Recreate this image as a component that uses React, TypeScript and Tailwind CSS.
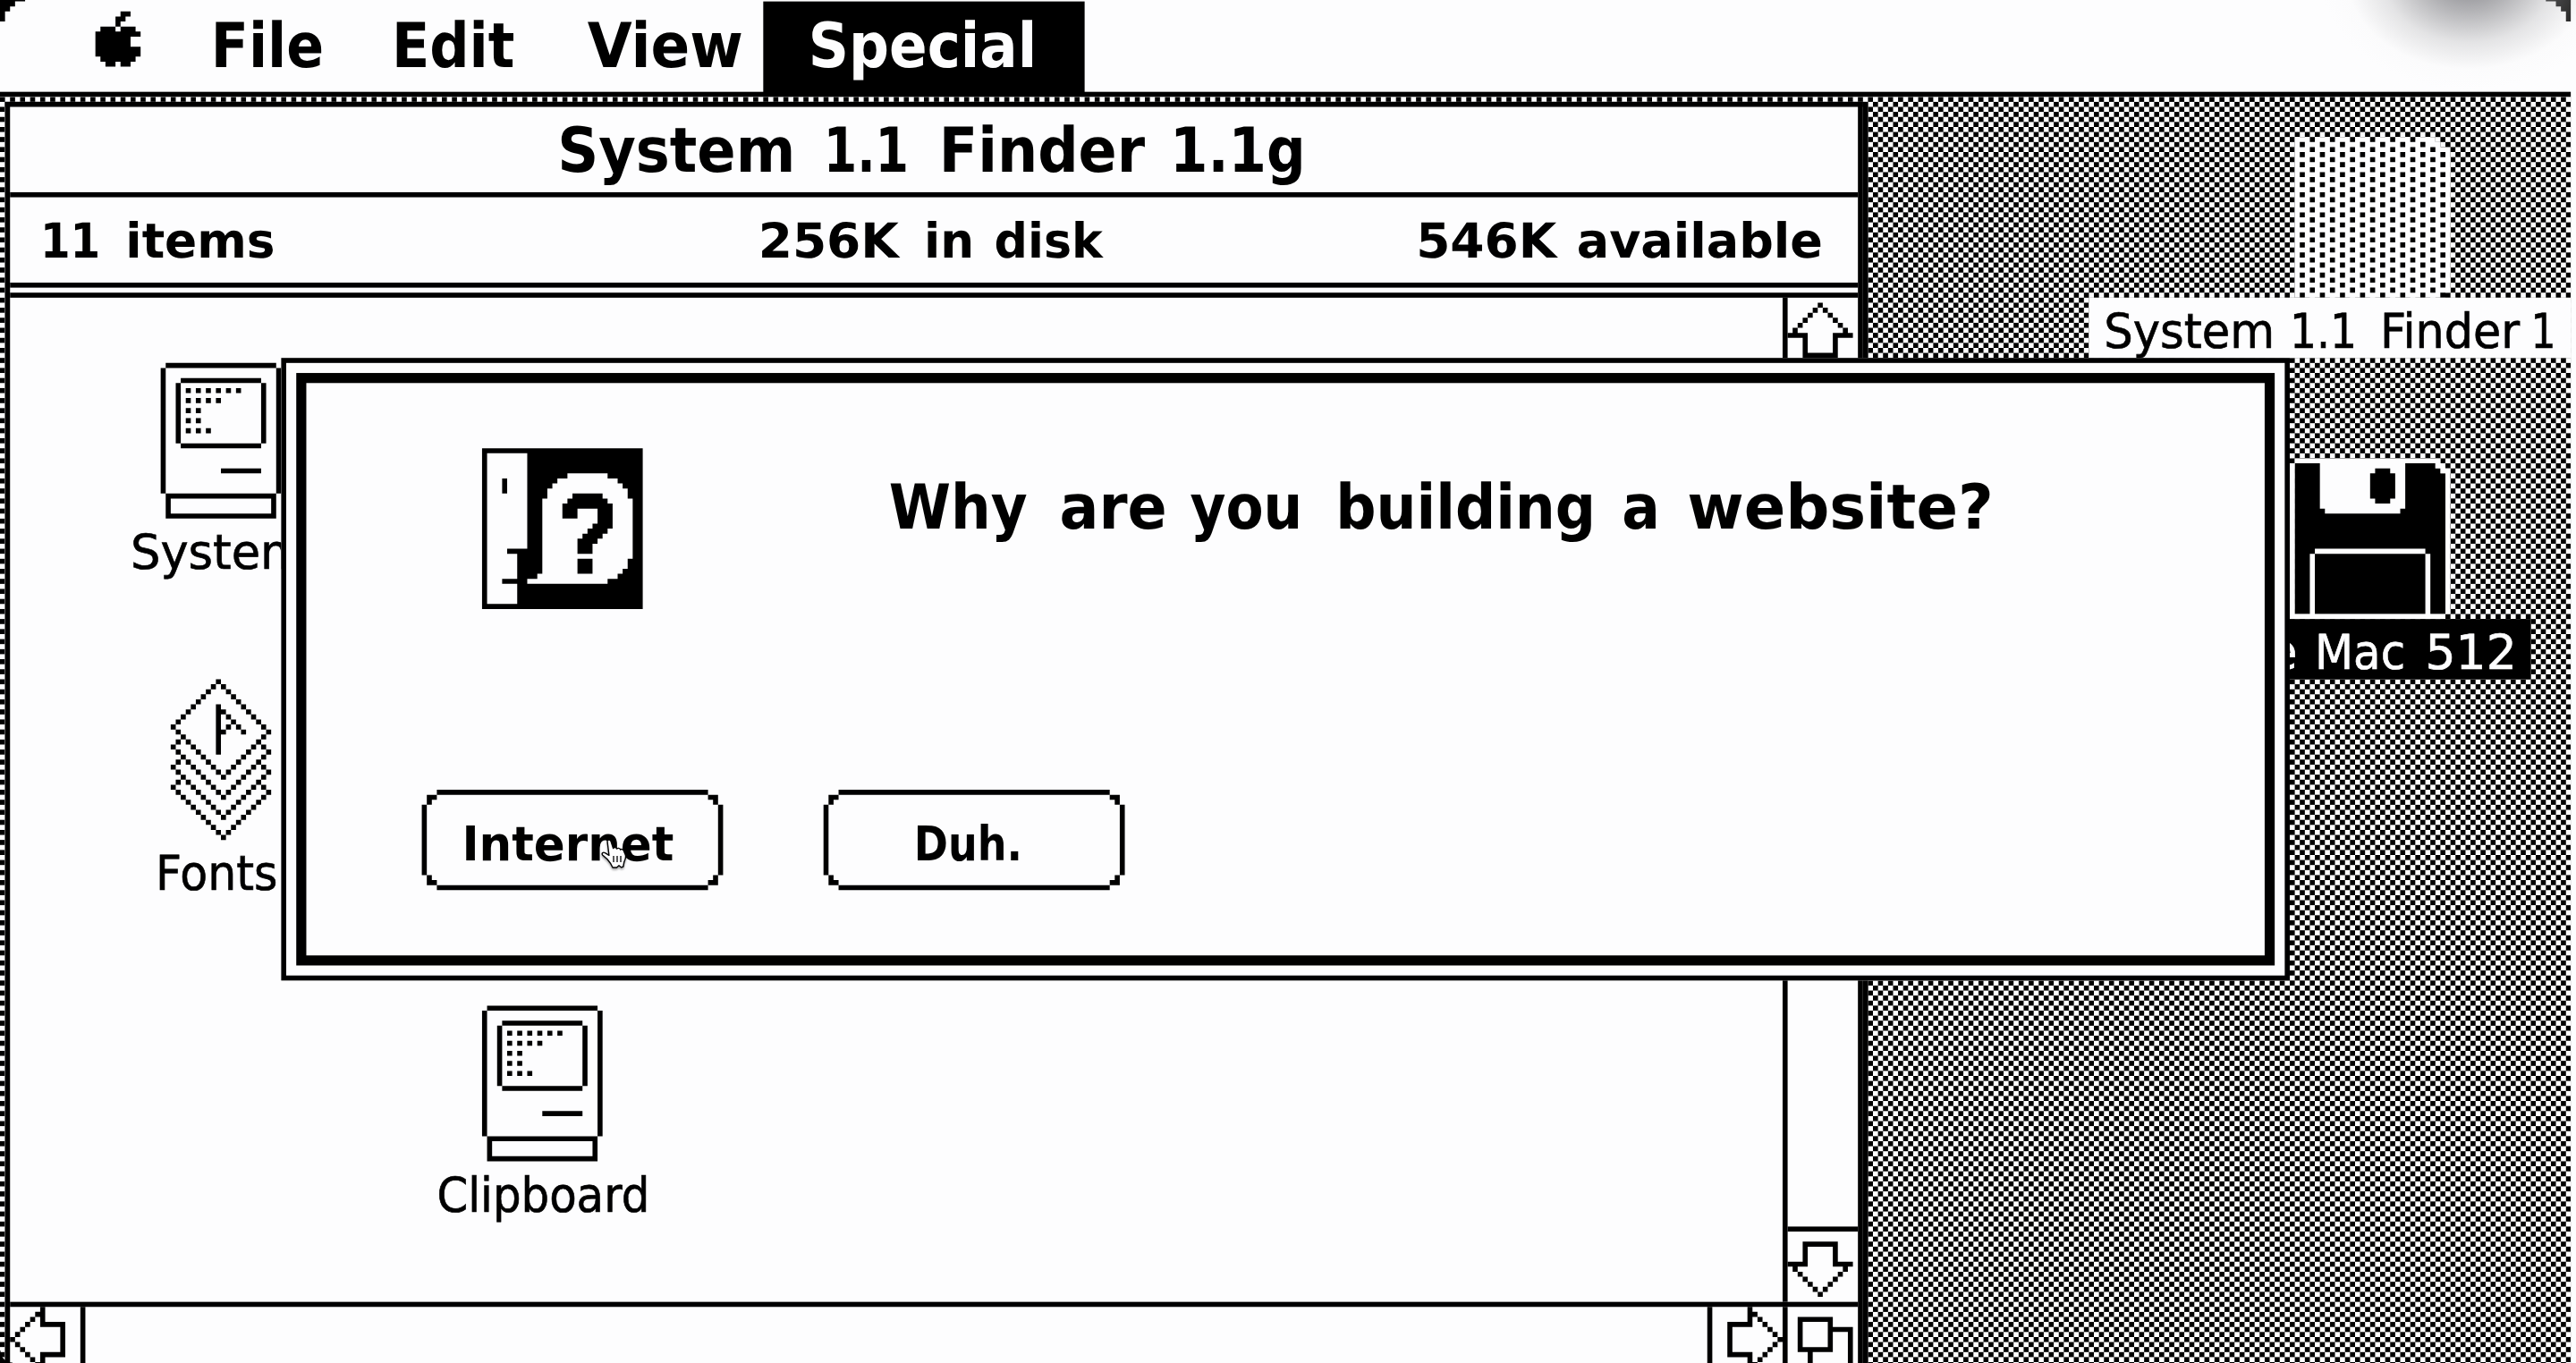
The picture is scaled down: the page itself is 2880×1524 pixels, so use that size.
import React, { useLayoutEffect, useRef } from "react";

type Rect = [number, number, number, number];

const box = (x: number, y: number, w: number, h: number): Rect[] => [
  [x, y, w, 1],
  [x, y + h - 1, w, 1],
  [x, y, 1, h],
  [x + w - 1, y, 1, h],
];

const diag = (x: number, y: number, n: number, dx: number, dy: number): Rect[] =>
  Array.from({ length: n }, (_, i): Rect => [x + i * dx, y + i * dy, 1, 1]);

const toPath = (rects: Rect[]) =>
  rects.map(([x, y, w, h]) => `M${x} ${y}h${w}v${h}h${-w}z`).join("");

/** A one-bit bitmap built from whole-pixel rectangles. */
function Bitmap({
  w,
  h,
  ink,
  paper = [],
  className = "",
}: {
  w: number;
  h: number;
  ink: Rect[];
  paper?: Rect[];
  className?: string;
}) {
  return (
    <svg width={w} height={h} viewBox={`0 0 ${w} ${h}`} className={`block shrink-0 overflow-visible ${className}`}>
      {paper.length > 0 && <path d={toPath(paper)} fill="#fdfdfe" />}
      <path d={toPath(ink)} fill="#000" />
    </svg>
  );
}

/** Text squeezed horizontally so that it fills the width given by its class. */
function Word({ children, className }: { children: string; className: string }) {
  const outer = useRef<HTMLSpanElement>(null);
  const inner = useRef<HTMLSpanElement>(null);
  useLayoutEffect(() => {
    const fit = () => {
      if (!outer.current || !inner.current) return;
      inner.current.style.transform = "none";
      const a = outer.current.getBoundingClientRect().width;
      const b = inner.current.getBoundingClientRect().width;
      if (b > 0) inner.current.style.transform = `scaleX(${a / b})`;
    };
    fit();
    document.fonts?.ready.then(fit);
  }, []);
  return (
    <span ref={outer} className={`block shrink-0 whitespace-nowrap ${className}`}>
      <span ref={inner} className="inline-block origin-left">
        {children}
      </span>
    </span>
  );
}

const CHICAGO =
  "font-['DejaVu_Sans_Condensed','DejaVu_Sans',sans-serif] font-bold text-[12.35px] leading-[12px]";
const CHICAGO_SMALL =
  "font-['DejaVu_Sans_Condensed','DejaVu_Sans',sans-serif] font-bold text-[9.6px] leading-[12px]";
const GENEVA_BOLD = "font-['DejaVu_Sans',sans-serif] font-bold text-[9.6px] leading-[12px]";
const GENEVA = "font-['DejaVu_Sans',sans-serif] text-[9.6px] leading-[12px] [-webkit-text-stroke:0.12px_currentColor]";

const APPLE: Rect[] = [
  [5, 0, 2, 1], [4, 1, 2, 1], [4, 2, 1, 1], [1, 3, 3, 1], [5, 3, 3, 1], [0, 4, 9, 1],
  [0, 5, 7, 2], [0, 7, 9, 2], [1, 9, 7, 1], [2, 10, 2, 1], [5, 10, 2, 1],
];

const dots = (y: number, n: number): Rect[] =>
  Array.from({ length: n }, (_, i): Rect => [5 + i * 2, y, 1, 1]);

const COMPACT_MAC: Rect[] = [
  [1, 0, 22, 1], [0, 1, 1, 25], [23, 1, 1, 25],
  [4, 3, 16, 1], [3, 4, 1, 12], [20, 4, 1, 12], [4, 16, 16, 1],
  ...dots(5, 6), ...dots(7, 4), ...dots(9, 2), ...dots(11, 2), ...dots(13, 3),
  [12, 21, 8, 1],
  ...box(1, 26, 22, 5),
];

const SUITCASE: Rect[] = [
  ...diag(9, 0, 10, -1, 1),
  ...diag(10, 1, 10, 1, 1),
  ...[0, 4, 8, 12].flatMap((k) => [...diag(0, 9 + k, 11, 1, 1), ...diag(19, 10 + k, 10, -1, 1)]),
  ...[4, 8, 12].flatMap((k): Rect[] => [[1, 8 + k, 1, 1], [18, 9 + k, 1, 1], [17, 8 + k, 1, 1]]),
  [9, 5, 1, 10],
  ...diag(10, 6, 5, 1, 1),
  [11, 9, 1, 1], [10, 10, 1, 1],
];

const QUESTION_PAPER: Rect[] = [
  [1, 1, 8, 19], [1, 20, 4, 1], [1, 21, 6, 5], [1, 26, 3, 1], [1, 27, 6, 4],
  [17, 5, 8, 1], [15, 6, 12, 1], [14, 7, 14, 1], [13, 8, 16, 2], [12, 10, 18, 12],
  [12, 22, 17, 2], [12, 24, 16, 1], [11, 25, 16, 1], [9, 26, 16, 1],
];
const QUESTION_INK: Rect[] = [
  [4, 6, 1, 3],
  [18, 9, 6, 1], [17, 10, 8, 1], [16, 11, 10, 1], [16, 12, 3, 2], [23, 12, 3, 3], [22, 15, 4, 1],
  [21, 16, 4, 1], [20, 17, 4, 1], [19, 18, 4, 1], [19, 19, 3, 2], [19, 22, 3, 3],
];

const UP_ARROW: Rect[] = [
  ...diag(6, 0, 6, -1, 1), ...diag(7, 1, 5, 1, 1), [0, 6, 4, 1], [9, 6, 4, 1],
  [3, 6, 1, 5], [9, 6, 1, 5], [3, 10, 7, 1],
];
const DOWN_ARROW: Rect[] = [
  [3, 0, 7, 1], [3, 0, 1, 5], [9, 0, 1, 5], [0, 4, 4, 1], [9, 4, 4, 1],
  ...diag(1, 5, 6, 1, 1), ...diag(11, 5, 5, -1, 1),
];
const RIGHT_ARROW: Rect[] = [
  [4, 0, 1, 4], [0, 3, 5, 1], [0, 3, 1, 7], [0, 9, 5, 1], [4, 9, 1, 4],
  ...diag(5, 1, 6, 1, 1), ...diag(9, 7, 5, -1, 1),
];
const LEFT_ARROW: Rect[] = [
  [6, 0, 1, 4], [6, 3, 5, 1], [10, 3, 1, 7], [6, 9, 5, 1], [6, 9, 1, 4],
  ...diag(5, 1, 6, -1, 1), ...diag(1, 7, 5, 1, 1),
];
const GROW_BOX: Rect[] = [...box(0, 0, 7, 7), [7, 2, 4, 1], [10, 2, 1, 10], [2, 7, 1, 5]];

const BUTTON_FRAME: Rect[] = [
  [3, 0, 54, 1], [3, 19, 54, 1], [0, 3, 1, 14], [59, 3, 1, 14],
  [1, 1, 2, 1], [1, 2, 1, 1], [57, 1, 2, 1], [58, 2, 1, 1],
  [1, 18, 2, 1], [1, 17, 1, 1], [57, 18, 2, 1], [58, 17, 1, 1],
];

const FLOPPY_INK: Rect[] = [
  [1, 1, 28, 1], [1, 2, 29, 1], [1, 3, 30, 28],
];
const FLOPPY_LINES: Rect[] = [
  [1, 0, 29, 1], [0, 1, 1, 31], [29, 1, 2, 1], [30, 2, 2, 1], [31, 3, 1, 28], [0, 31, 31, 1],
  [6, 0, 17, 10], [7, 10, 15, 1],
  [5, 18, 22, 1], [4, 19, 1, 12], [27, 19, 1, 12],
];
const FLOPPY_HUB: Rect[] = [[17, 2, 3, 7], [16, 3, 5, 5]];

const GHOST_PAPER: Rect[] = [[0, 0, 28, 1], [0, 1, 29, 1], [0, 2, 30, 1], [0, 3, 31, 28], [0, 31, 29, 1]];
const GHOST_DOTS: Rect[] = Array.from({ length: 32 }, (_, r) => r).flatMap((r) =>
  Array.from({ length: 8 }, (_, i): Rect => [(r % 2 ? 1 : 3) + i * 4, r, 1, 1]).filter(
    ([x]) => x < (r === 0 ? 27 : r < 3 ? 26 + r : 30)
  )
);

function MenuBar() {
  return (
    <header className="relative flex h-[20px] shrink-0 border-b border-black bg-[#fdfdfe]">
      <Bitmap w={9} h={11} ink={APPLE} className="mt-[3px] ml-[19px]" />
      <nav className={`flex ${CHICAGO}`}>
        <div className="ml-[14.3px] pt-[3.7px]">
          <Word className="w-[22.5px]">File</Word>
        </div>
        <div className="ml-[13.4px] pt-[3.7px]">
          <Word className="w-[24.5px]">Edit</Word>
        </div>
        <div className="ml-[13.9px] pt-[3.7px]">
          <Word className="w-[31px]">View</Word>
        </div>
        <div className="mt-[1px] ml-[4.4px] flex h-[19px] w-[64px] justify-center bg-black pt-[2.7px] text-[#fdfdfe]">
          <Word className="-ml-[0.2px] w-[45.5px]">Special</Word>
        </div>
      </nav>
      <Bitmap w={5} h={5} ink={[[0, 0, 5, 1], [0, 1, 3, 1], [0, 2, 2, 1], [0, 3, 1, 2]]} className="absolute top-0 left-0" />
      <Bitmap w={5} h={5} ink={[[0, 0, 5, 1], [2, 1, 3, 1], [3, 2, 2, 1], [4, 3, 1, 2]]} className="absolute top-0 right-0" />
    </header>
  );
}

function FinderWindow() {
  return (
    <section className="absolute top-[1px] left-[1px] flex h-[260px] w-[370px] flex-col border-x border-t border-black bg-[#fdfdfe] shadow-[1px_0_0_#000]">
      <div className={`flex h-[18px] shrink-0 justify-center border-b border-black pt-[2.8px] pr-[1px] ${CHICAGO}`}>
        <Word className="w-[47.4px]">System</Word>
        <Word className="ml-[5.2px] w-[17px]">1.1</Word>
        <Word className="ml-[6.2px] w-[41px]">Finder</Word>
        <Word className="ml-[5.2px] w-[27px]">1.1g</Word>
      </div>
      <div className={`flex h-[18px] shrink-0 border-b border-black pt-[3.8px] pl-[6px] ${GENEVA_BOLD}`}>
        <Word className="w-[12px]">11</Word>
        <Word className="ml-[5.2px] w-[29.8px]">items</Word>
        <Word className="ml-[96.3px] w-[28px]">256K</Word>
        <Word className="ml-[4.3px] w-[10px]">in</Word>
        <Word className="ml-[4.2px] w-[21.6px]">disk</Word>
        <Word className="ml-[62.6px] w-[28px]">546K</Word>
        <Word className="ml-[4.5px] w-[49px]">available</Word>
      </div>
      <div className="h-[2px] shrink-0 border-b border-black" />
      <div className="flex h-[200px] shrink-0">
        <div className={`relative flex-1 ${GENEVA}`}>
          <Bitmap w={24} h={31} ink={COMPACT_MAC} className="absolute top-[13px] left-[30px]" />
          <div className="absolute top-[45.7px] left-[24.2px]">
            <Word className="w-[35px]">System</Word>
          </div>
          <Bitmap w={20} h={32} ink={SUITCASE} className="absolute top-[76px] left-[32px]" />
          <div className="absolute top-[109.7px] left-[29.1px]">
            <Word className="w-[24.3px]">Fonts</Word>
          </div>
          <Bitmap w={24} h={31} ink={COMPACT_MAC} className="absolute top-[141px] left-[94px]" />
          <div className="absolute top-[173.7px] left-[84.5px]">
            <Word className="w-[42.4px]">Clipboard</Word>
          </div>
        </div>
        <div className="flex w-[15px] flex-col justify-between border-l border-black">
          <div className="h-[16px] border-b border-black pt-[1px]">
            <Bitmap w={13} h={11} ink={UP_ARROW} />
          </div>
          <div className="h-[15px] border-t border-black pt-[2px]">
            <Bitmap w={13} h={11} ink={DOWN_ARROW} />
          </div>
        </div>
      </div>
      <div className="flex h-[16px] shrink-0 border-t border-black">
        <div className="w-[15px] border-r border-black">
          <Bitmap w={11} h={13} ink={LEFT_ARROW} />
        </div>
        <div className="flex-1" />
        <div className="w-[15px] border-l border-black pl-[3px]">
          <Bitmap w={11} h={13} ink={RIGHT_ARROW} />
        </div>
        <div className="w-[15px] border-l border-black pt-[2px] pl-[2px]">
          <Bitmap w={11} h={12} ink={GROW_BOX} />
        </div>
      </div>
    </section>
  );
}

function DesktopIcons() {
  return (
    <>
      <div className="absolute top-[8px] left-[416px] flex w-[96px] flex-col">
        <Bitmap w={31} h={32} ink={GHOST_DOTS} paper={GHOST_PAPER} className="ml-[41px]" />
        <div className={`flex h-[12px] bg-[#fdfdfe] pt-[0.8px] pl-[2.7px] ${GENEVA}`}>
          <div className="flex h-[12px] pt-[0.9px]">
            <Word className="w-[34px]">System</Word>
            <Word className="ml-[3.7px] w-[13.4px]">1.1</Word>
            <Word className="ml-[3.8px] w-[27.8px]">Finder</Word>
            <Word className="ml-[3px] w-[5px]">1</Word>
          </div>
        </div>
      </div>
      <div className="absolute top-[72px] left-[408px] flex w-[96px] flex-col">
        <div className="relative ml-[48px]">
          <Bitmap w={32} h={32} ink={FLOPPY_INK} />
          <svg width="32" height="32" viewBox="0 0 32 32" className="absolute top-0 left-0">
            <path d={toPath(FLOPPY_LINES)} fill="#fdfdfe" />
            <path d={toPath(FLOPPY_HUB)} fill="#000" />
          </svg>
        </div>
        <div className={`flex h-[12px] justify-end bg-black pt-[1.7px] pr-[3px] text-[#fdfdfe] ${GENEVA}`}>
          <Word className="w-[5.5px]">e</Word>
          <Word className="ml-[3.3px] w-[18px]">Mac</Word>
          <Word className="ml-[3.7px] w-[18.2px]">512</Word>
        </div>
      </div>
    </>
  );
}

function PushButton({ children }: { children: React.ReactNode }) {
  return (
    <button className={`relative flex h-[20px] w-[60px] pt-[4.7px] ${CHICAGO_SMALL}`}>
      <Bitmap w={60} h={20} ink={BUTTON_FRAME} className="absolute top-0 left-0" />
      {children}
    </button>
  );
}

function Dialog() {
  return (
    <section className="absolute top-[52px] left-[56px] h-[124px] w-[400px] border border-black bg-[#fdfdfe] p-[2px]">
      <div className="flex h-full flex-col border-2 border-black">
        <div className="flex pt-[13px] pl-[35px]">
          <Bitmap w={32} h={32} ink={[[0, 0, 32, 32]]} />
          <svg width="32" height="32" viewBox="0 0 32 32" className="-ml-[32px] block">
            <path d={toPath(QUESTION_PAPER)} fill="#fdfdfe" />
            <path d={toPath(QUESTION_INK)} fill="#000" />
          </svg>
          <p className={`ml-[49.4px] flex pt-[5.7px] ${CHICAGO}`}>
            <Word className="w-[27.6px]">Why</Word>
            <Word className="ml-[5.6px] w-[21.4px]">are</Word>
            <Word className="ml-[5.3px] w-[22.4px]">you</Word>
            <Word className="ml-[6.3px] w-[51.8px]">building</Word>
            <Word className="ml-[5.4px] w-[7.6px]">a</Word>
            <Word className="ml-[5.4px] w-[61px]">website?</Word>
          </p>
        </div>
        <div className="mt-[36px] ml-[23px] flex gap-[20px]">
          <PushButton>
            <Word className="ml-[7px] w-[42.2px]">Internet</Word>
          </PushButton>
          <PushButton>
            <Word className="ml-[18.1px] w-[21.6px]">Duh.</Word>
          </PushButton>
        </div>
      </div>
    </section>
  );
}

function HandCursor() {
  return (
    <svg
      width="32"
      height="34"
      viewBox="0 0 32 34"
      className="absolute top-[938px] left-[672px] drop-shadow-[0_2px_1px_rgba(0,0,0,0.35)]"
    >
      <path
        d="M7 2.5c0-2 3.5-2 4 0l2.6 8c.8-1.400 3.400-1.200 4 .6 1-1.200 3.400-1 4 .9 1-1 3.200-.5 3.700 1.200l2 4.800c.9 3.200-.6 5.400-1.500 7.600l-1 5.400-2.300.8-2.500-2-2.500 2.200h-4.500c-1.500-3.500-3.500-6.500-6-9.300L1.600 18c-1.400-2 .8-3.700 2.900-2.300l4.400 2.600z"
        fill="#fdfdfe"
        stroke="#000"
        strokeWidth="1.400"
        strokeLinejoin="round"
      />
      <path d="M14 19v7M18 19v7M22 19v7" stroke="#000" strokeWidth="1.300" />
    </svg>
  );
}

export default function App() {
  return (
    <main className="relative h-[1524px] w-[2880px] overflow-hidden bg-[#fdfdfe]">
      <div className="flex h-[273px] w-[512px] origin-top-left -translate-y-[4px] scale-[5.614] flex-col overflow-hidden text-black [text-rendering:geometricPrecision]">
        <MenuBar />
        <div className="relative flex-1 bg-[conic-gradient(#fdfdfe_25%,#000_0_50%,#fdfdfe_0_75%,#000_0)] bg-[length:2px_2px]">
          <FinderWindow />
          <DesktopIcons />
          <Dialog />
        </div>
      </div>
      <div className="absolute top-0 right-0 h-[100px] w-[300px] bg-[radial-gradient(ellipse_165px_125px_at_180px_-25px,rgba(110,110,116,0.85)_0%,rgba(140,140,144,0.65)_30%,rgba(190,190,192,0.4)_58%,rgba(240,240,240,0.15)_82%,transparent_100%)]" />
      <HandCursor />
      <div className="absolute bottom-0 left-0 h-[14px] w-[14px] bg-[radial-gradient(circle_at_100%_0,transparent_13px,#000_14px)]" />
    </main>
  );
}
